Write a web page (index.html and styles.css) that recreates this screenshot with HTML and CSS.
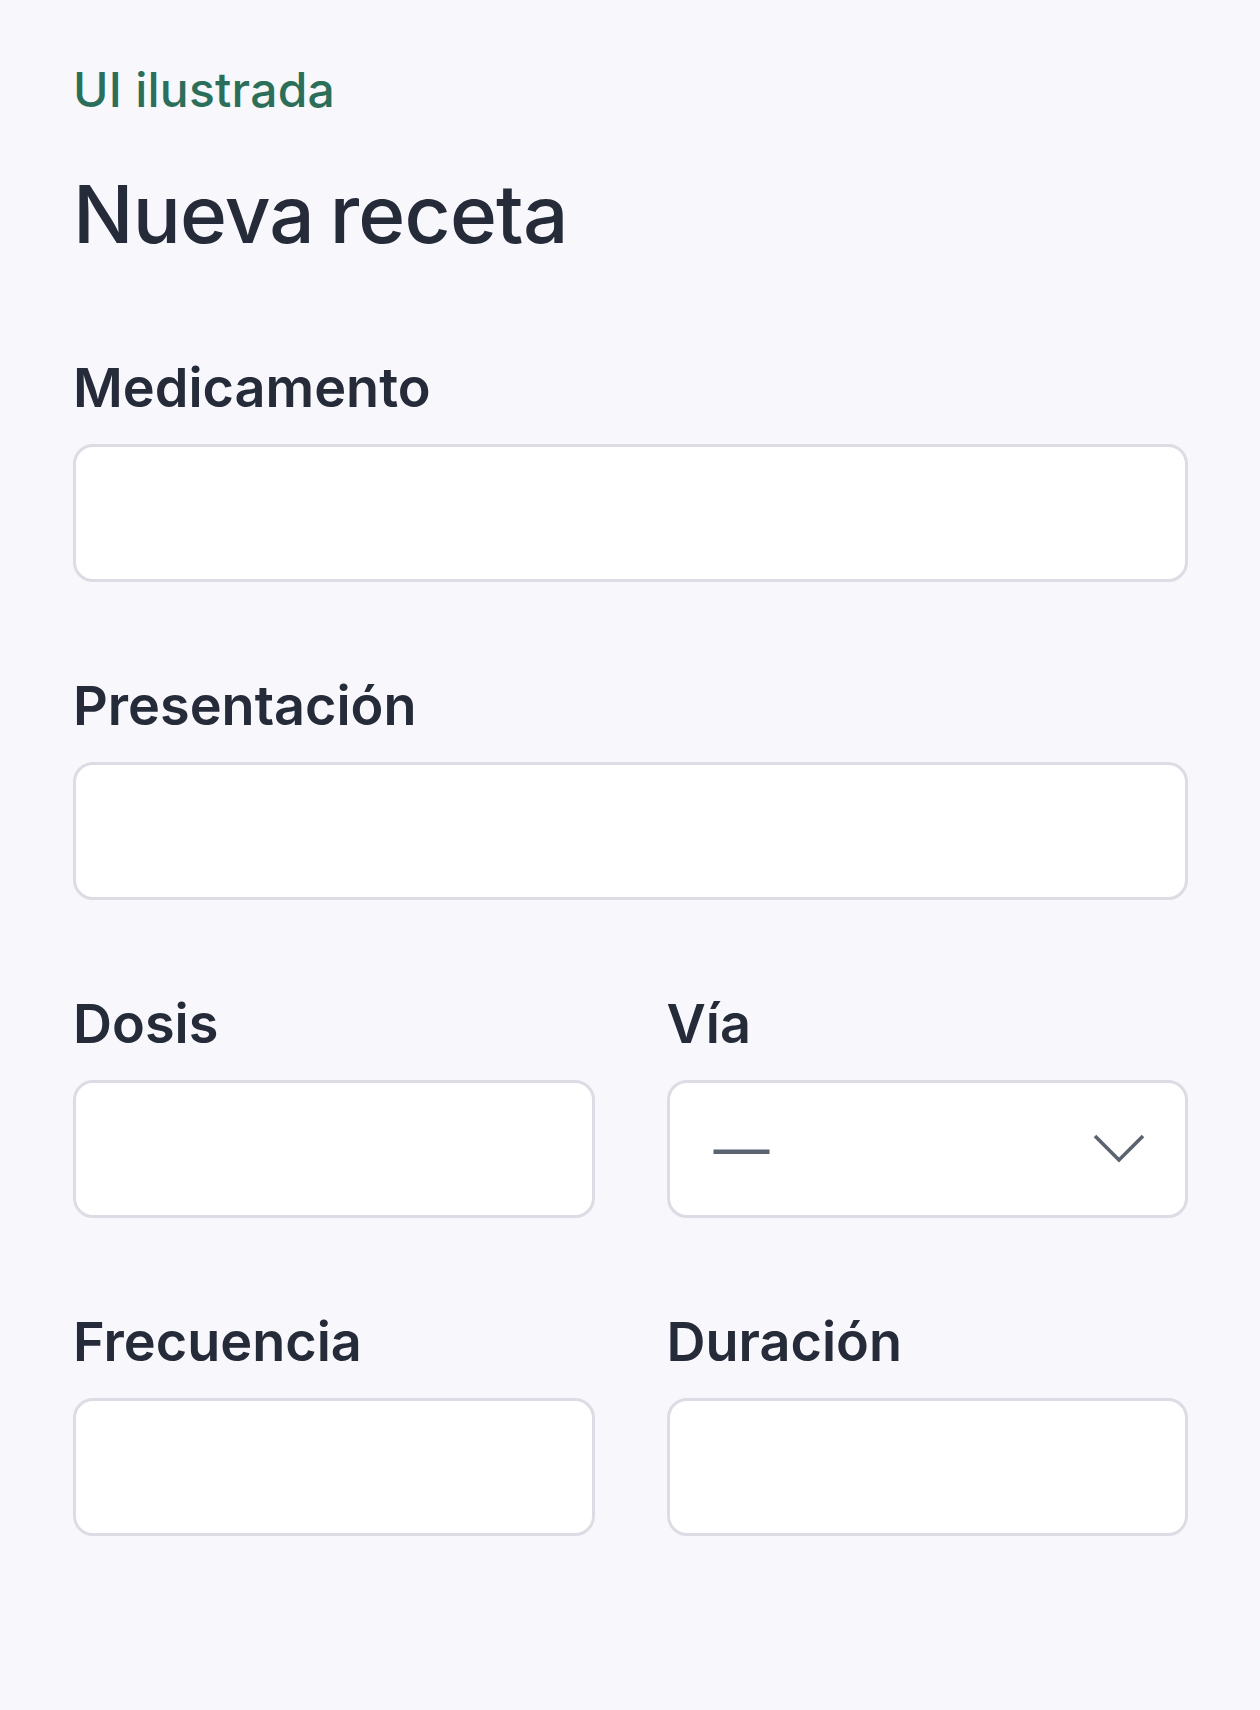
FILE: index.html
```html
<!DOCTYPE html>
<html lang="es">
<head>
    <meta charset="UTF-8">
    <meta name="viewport" content="width=device-width, initial-scale=1.0">
    <title>Nueva receta</title>
    <link rel="stylesheet" href="styles.css">
</head>
<body>
    <div class="page">
        <div class="eyebrow">UI ilustrada</div>
        <h1 class="title">Nueva receta</h1>

        <form class="form">
            <div class="field full">
                <label for="medicamento">Medicamento</label>
                <input type="text" id="medicamento">
            </div>
            <div class="field full">
                <label for="presentacion">Presentación</label>
                <input type="text" id="presentacion">
            </div>
            <div class="field">
                <label for="dosis">Dosis</label>
                <input type="text" id="dosis">
            </div>
            <div class="field">
                <label>Vía</label>
                <div class="select">
                    <span class="select-value">—</span>
                    <svg class="chevron" viewBox="0 0 52 30" width="52" height="30">
                        <polyline points="2,2 26,26 50,2" fill="none" stroke="#5b6370" stroke-width="3.6"/>
                    </svg>
                </div>
            </div>
            <div class="field">
                <label for="frecuencia">Frecuencia</label>
                <input type="text" id="frecuencia">
            </div>
            <div class="field">
                <label for="duracion">Duración</label>
                <input type="text" id="duracion">
            </div>
        </form>
    </div>
</body>
</html>
```

FILE: styles.css
```css
body {
    margin: 0;
    background-color: #f7f7fc;
    font-family: Inter, "Noto Sans", sans-serif;
    color: #252b38;
}
.page {
    padding: 61px 72px 80px 73px;
}
.eyebrow {
    font-size: 48px;
    line-height: 1.2;
    font-weight: 500;
    color: #2b6f5a;
    letter-spacing: 0.005em;
}
.title {
    margin: 47px 0 0 0;
    font-size: 80px;
    line-height: 1.2;
    font-weight: 500;
    letter-spacing: -0.01em;
    word-spacing: -0.06em;
}
.form {
    margin-top: 93px;
    display: grid;
    grid-template-columns: 1fr 1fr;
    column-gap: 72px;
    row-gap: 91px;
}
.field {
    display: flex;
    flex-direction: column;
    gap: 24px;
}
.field.full {
    grid-column: 1 / 3;
}
.field label {
    font-size: 54px;
    line-height: 65px;
    font-weight: 600;
}
.field input,
.select {
    box-sizing: border-box;
    height: 138px;
    width: 100%;
    margin: 0;
    background-color: #fff;
    border: 3px solid #dcdde4;
    border-radius: 20px;
    font-family: inherit;
    font-size: 50px;
    outline: none;
}
.select {
    display: flex;
    align-items: center;
    justify-content: space-between;
    padding: 0 40px 0 44px;
}
.select-value {
    color: #5b6370;
    font-size: 56px;
    line-height: 1;
}
.chevron {
    display: block;
}
```
